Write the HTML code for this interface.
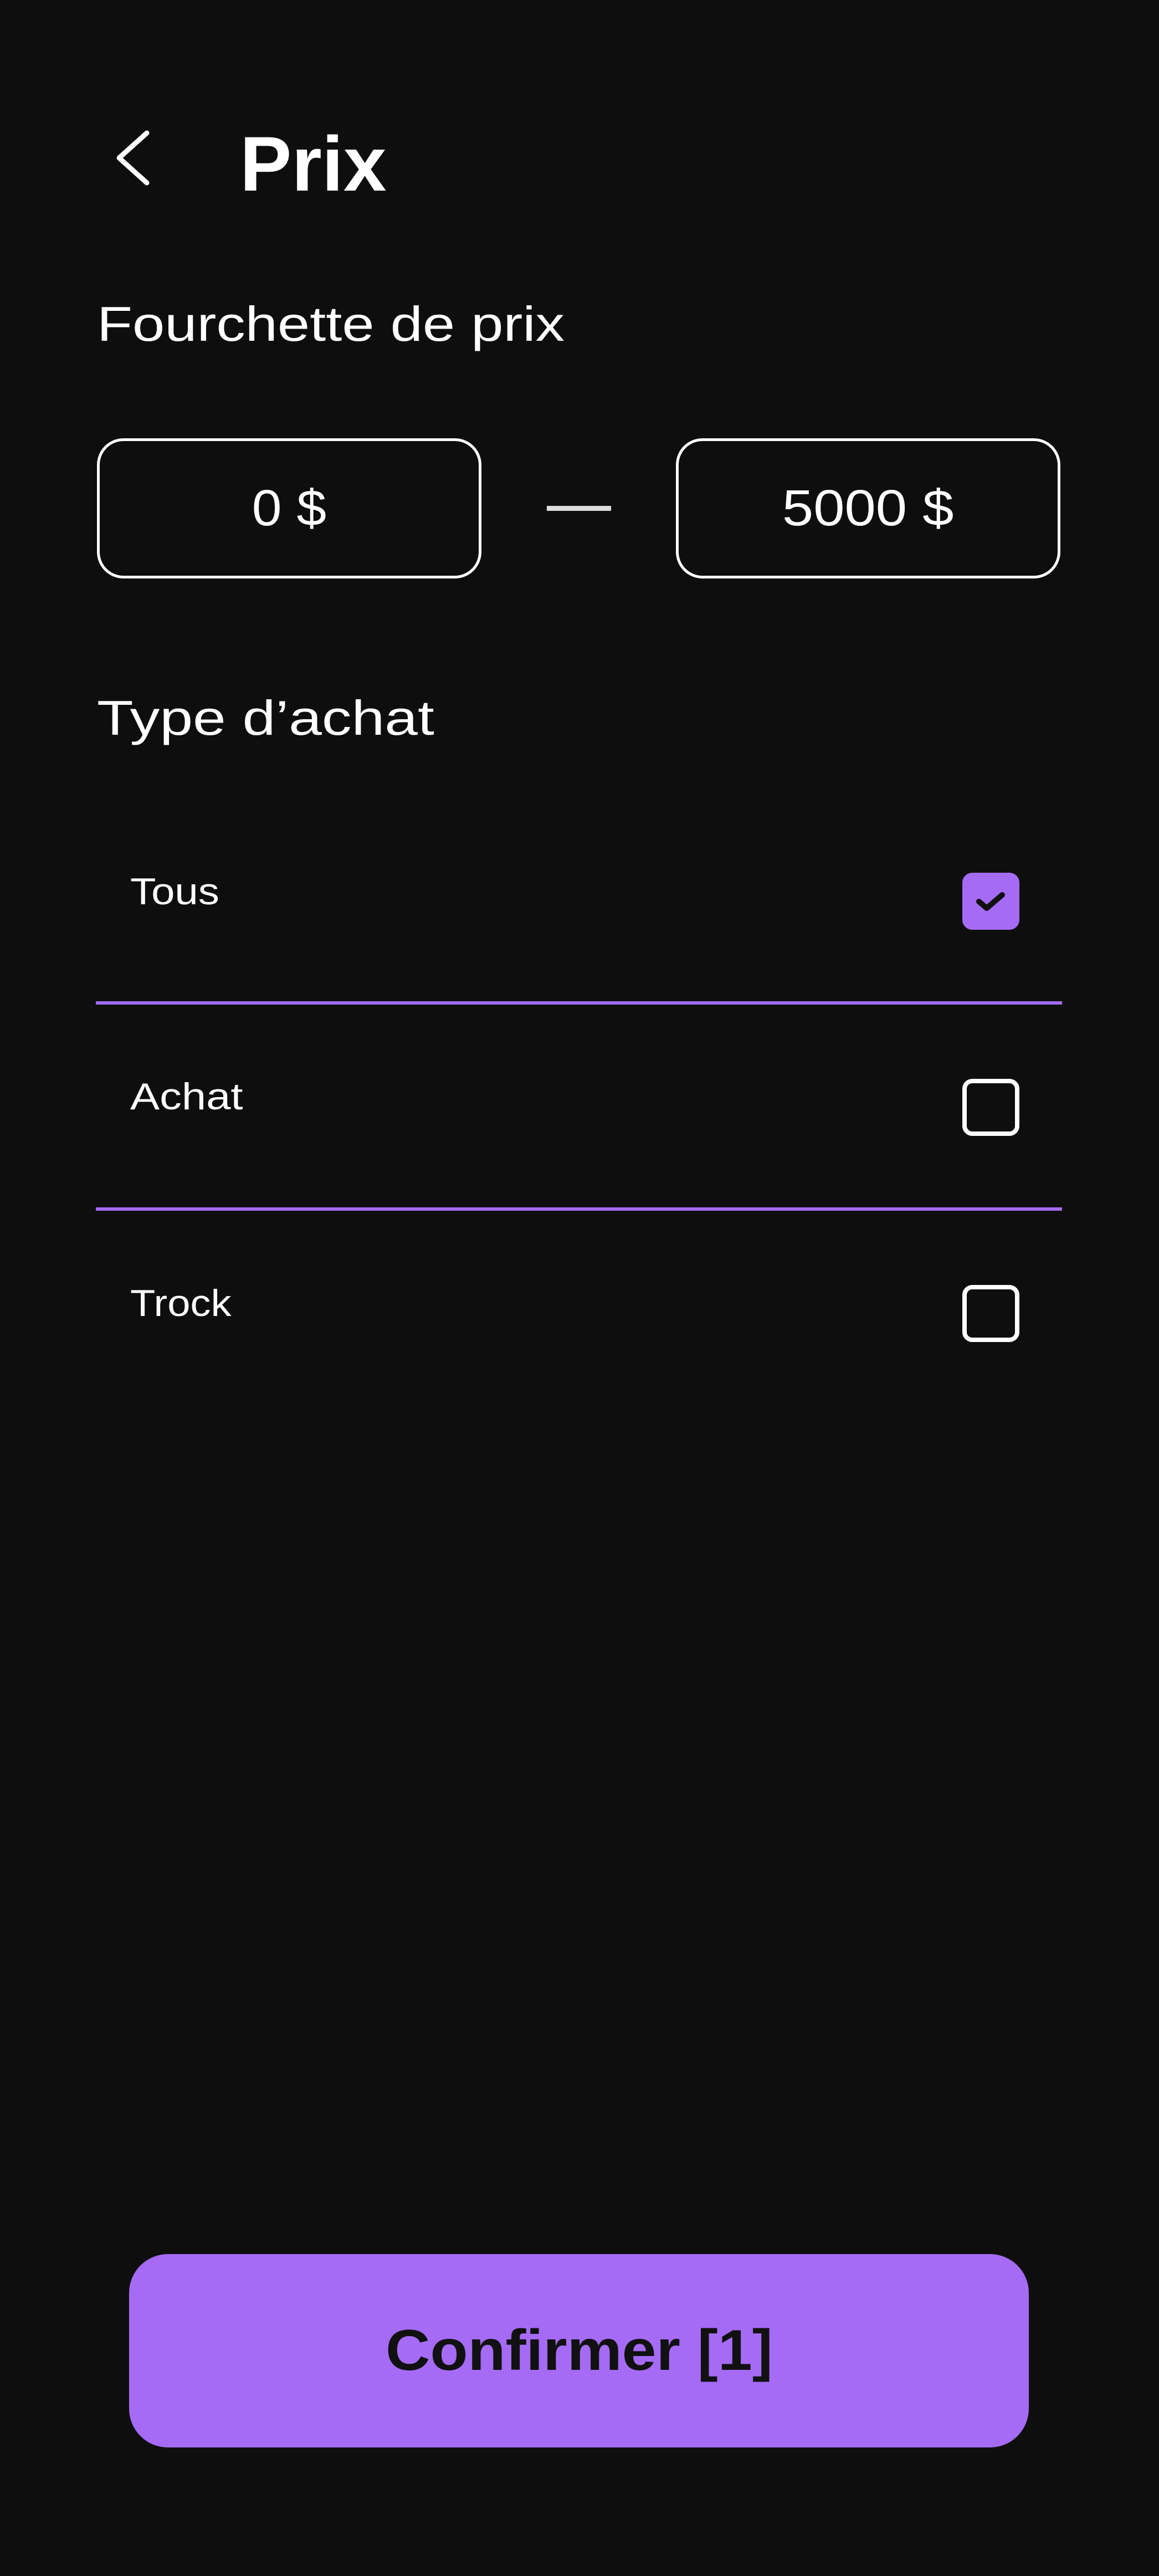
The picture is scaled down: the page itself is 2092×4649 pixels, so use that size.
<!DOCTYPE html>
<html><head><meta charset="utf-8"><style>
html,body{margin:0;padding:0;}
body{width:2092px;height:4649px;background:#0e0e0e;position:relative;overflow:hidden;font-family:"Liberation Sans",sans-serif;color:#fff;}
.t{position:absolute;white-space:nowrap;line-height:1;transform-origin:left center;}
.box{position:absolute;top:791px;height:253px;border:5px solid #fff;border-radius:48px;box-sizing:border-box;display:flex;align-items:center;justify-content:center;font-size:92px;}
.line{position:absolute;left:173px;width:1744px;height:6px;background:#a56bf5;}
.cb{position:absolute;left:1737px;width:103px;height:103px;box-sizing:border-box;border:8px solid #fff;border-radius:18px;}
.opt{font-size:68px;transform:scaleX(1.12);}
</style></head><body>
<svg style="position:absolute;left:0;top:0" width="400" height="400"><path d="M265 240 L215 285 L265 330" fill="none" stroke="#fff" stroke-width="9" stroke-linecap="round" stroke-linejoin="round"/></svg>
<div class="t" style="left:433px;top:226px;font-size:140px;font-weight:bold;">Prix</div>
<div class="t" style="left:175px;top:541px;font-size:88px;transform:scaleX(1.19);">Fourchette de prix</div>
<div class="box" style="left:175px;width:694px;"><span style="display:inline-block;transform:scaleX(1.05)">0 $</span></div>
<div style="position:absolute;left:987px;top:913px;width:116px;height:9px;background:#ddd;"></div>
<div class="box" style="left:1220px;width:694px;"><span style="display:inline-block;transform:scaleX(1.1)">5000 $</span></div>
<div class="t" style="left:175px;top:1252px;font-size:88px;transform:scaleX(1.22);">Type d’achat</div>
<div class="t opt" style="left:235px;top:1575px;">Tous</div>
<div class="cb" style="top:1575px;background:#a56bf5;border-color:#a56bf5;"></div>
<svg style="position:absolute;left:1737px;top:1575px" width="103" height="103"><path d="M30 52 L44 64 L72 40" fill="none" stroke="#111" stroke-width="10" stroke-linecap="round" stroke-linejoin="round"/></svg>
<div class="line" style="top:1807px;"></div>
<div class="t opt" style="left:235px;top:1945px;transform:scaleX(1.17);">Achat</div>
<div class="cb" style="top:1947px;"></div>
<div class="line" style="top:2179px;"></div>
<div class="t opt" style="left:235px;top:2318px;transform:scaleX(1.09);">Trock</div>
<div class="cb" style="top:2319px;"></div>
<div style="position:absolute;left:233px;top:4068px;width:1624px;height:349px;background:#a56bf5;border-radius:70px;display:flex;align-items:center;justify-content:center;font-size:104px;font-weight:bold;color:#111;"><span style="display:inline-block;transform:scaleX(1.07)">Confirmer [1]</span></div>
</body></html>
